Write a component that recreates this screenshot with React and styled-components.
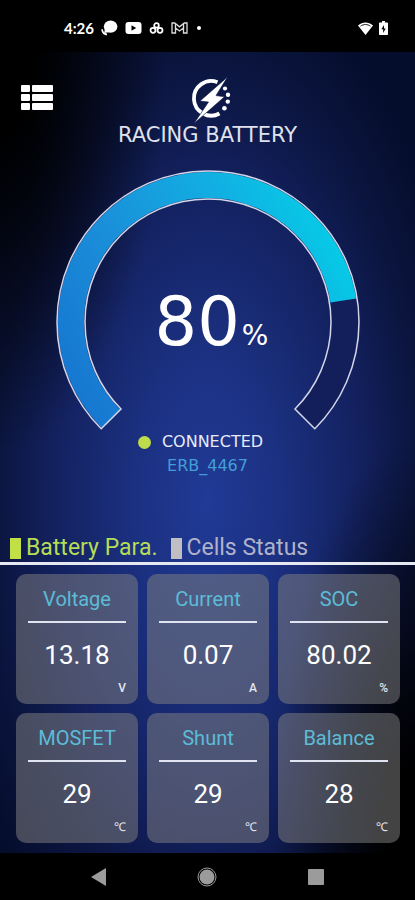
import { useState } from 'react'
import styled, { createGlobalStyle } from 'styled-components'

const GlobalStyle = createGlobalStyle`
   * {
      box-sizing: border-box;
   }

   body {
      margin: 0;
      background-color: #000;
      font-family: Roboto, 'Liberation Sans', sans-serif;
   }

   button {
      padding: 0;
      border: none;
      background: none;
      font-family: inherit;
      cursor: pointer;
   }

   svg {
      display: block;
   }
`

const Screen = styled.div`
   display: flex;
   flex-direction: column;
   min-height: 100vh;
   color: #fff;
`

// status bar
const StatusBar = styled.div`
   display: flex;
   justify-content: space-between;
   align-items: center;
   height: 52px;
   padding: 4px 27px 0 64px;
   background-color: #000;
`

const StatusGroup = styled.div`
   display: flex;
   align-items: center;
   gap: ${(props) => props.$gap};
`

const Clock = styled.span`
   font-family: Lato, sans-serif;
   font-size: 15px;
   font-weight: 700;
   line-height: 16px;
`

const Main = styled.main`
   flex: 1;
   display: flex;
   flex-direction: column;
   background:
      radial-gradient(ellipse 40% 50% at 0% 0%, #000 20%, transparent 100%),
      radial-gradient(ellipse 34% 52% at 100% 100%, #000 20%, transparent 100%),
      radial-gradient(ellipse 64% 68% at 50% 56%, #203a96 0%, #1b3080 28%, #13215f 58%, #0b153f 80%, #050d2c 100%);
`

const Header = styled.header`
   display: grid;
   grid-template-columns: 1fr auto 1fr;
   align-items: start;
   padding: 24px 21px 0;
`

const MenuButton = styled.button`
   justify-self: start;
   margin-top: 9px;
`

const Brand = styled.div`
   display: flex;
   flex-direction: column;
   align-items: center;
   gap: 1px;
`

const BrandName = styled.h1`
   margin: 0;
   font-family: 'DejaVu Sans', sans-serif;
   font-size: 21px;
   font-weight: 400;
   line-height: 20px;
   color: #dfe1ec;
`

// the number sits in the same grid cell as the gauge
const GaugeBox = styled.section`
   display: grid;
   justify-items: center;
   align-items: center;
   margin-top: 24px;

   > * {
      grid-area: 1 / 1;
   }
`

const Percent = styled.p`
   display: flex;
   align-items: baseline;
   gap: 2px;
   margin: 56px 0 0 8px;
   font-family: 'DejaVu Sans', sans-serif;
   font-size: 67px;
   line-height: 68px;
`

const PercentSign = styled.span`
   font-size: 28px;
`

const Connection = styled.section`
   display: flex;
   flex-direction: column;
   align-items: center;
   margin-top: -3px;
   font-family: 'DejaVu Sans', sans-serif;
   font-size: 16px;
   line-height: 24px;
`

const ConnectionState = styled.div`
   display: flex;
   align-items: center;
   gap: 11px;
   margin-right: 14px;
   color: #e8eafa;

   &::before {
      content: '';
      width: 13px;
      height: 13px;
      border-radius: 50%;
      background-color: #bedb4c;
   }
`

const DeviceName = styled.div`
   color: #429fd6;
`

const Tabs = styled.div`
   display: flex;
   gap: 13px;
   margin-top: 56px;
   padding: 0 10px;
   border-bottom: 3px solid #e6e8f2;
`

const Tab = styled.button`
   display: flex;
   align-items: center;
   gap: 5px;
   font-size: 23px;
   line-height: 28px;
   color: ${(props) => (props.$active ? '#b5dc57' : '#b1b2c8')};

   &::before {
      content: '';
      width: 11px;
      height: 21px;
      background-color: ${(props) => (props.$active ? '#c0e046' : '#bfbfc3')};
   }
`

const CardGrid = styled.section`
   display: grid;
   grid-template-columns: repeat(3, 1fr);
   gap: 9px;
   padding: 9px 15px 10px 16px;
`

const Card = styled.article`
   display: flex;
   flex-direction: column;
   height: 130px;
   padding: 12px 12px 8px;
   border-radius: 10px;
   background-color: rgba(128, 128, 128, 0.52);
   text-align: center;
`

const CardTitle = styled.h2`
   margin: 0;
   padding-bottom: 9px;
   border-bottom: 2px solid #dfe4f0;
   font-size: 20px;
   font-weight: 400;
   line-height: 26px;
   color: #5cbcd6;
`

const CardValue = styled.div`
   margin-top: 16px;
   font-size: 26px;
   line-height: 32px;
`

const CardUnit = styled.div`
   margin-top: auto;
   font-size: 12px;
   font-weight: 500;
   line-height: 16px;
   text-align: right;
   color: #e4e6f0;
`

const NavBar = styled.nav`
   display: flex;
   justify-content: space-between;
   align-items: center;
   height: 47px;
   padding: 0 91px;
   background-color: #000;
`

const NavButton = styled.button`
   color: #9b9b9b;
`

const readings = [
   { title: 'Voltage', value: '13.18', unit: 'V' },
   { title: 'Current', value: '0.07', unit: 'A' },
   { title: 'SOC', value: '80.02', unit: '%' },
   { title: 'MOSFET', value: '29', unit: '℃' },
   { title: 'Shunt', value: '29', unit: '℃' },
   { title: 'Balance', value: '28', unit: '℃' },
]

const tabs = ['Battery Para.', 'Cells Status']

function StatusIcons() {
   return (
      <>
         <svg width="17" height="16" viewBox="0 0 17 16" fill="#fff">
            <ellipse cx="9.6" cy="6.6" rx="6.8" ry="6.2" />
            <path d="M4 8 3.200 13 9 12z" />
            <path d="M.3 9.200c0 3.300 2.200 5.800 5.700 6.100v-1.800C3.500 13.200 2 11.500 1.900 9.200z" />
         </svg>
         <svg width="17" height="12" viewBox="0 0 17 12">
            <rect x="0.5" width="16" height="12" rx="3" fill="#fff" />
            <path d="M6.500 3.200v5.600L11.200 6z" fill="#000" />
         </svg>
         <svg width="15" height="12" viewBox="0 0 15 12" fill="none" stroke="#fff" strokeWidth="1.800">
            <circle cx="7.500" cy="3.400" r="2.300" />
            <circle cx="4" cy="8.300" r="2.500" />
            <circle cx="11" cy="8.300" r="2.500" />
         </svg>
         <svg width="17" height="12" viewBox="0 0 17 12" fill="none" stroke="#ddd" strokeWidth="1.300">
            <path d="M1 1h2.700l4.800 3.800L13.300 1H16v10h-3.500V6L8.500 9l-4-3v5H1z" />
            <path d="M4.500 2v4M12.500 2v4" />
         </svg>
         <svg width="10" height="12" viewBox="0 0 10 12" fill="#fff">
            <circle cx="4" cy="6" r="2" />
         </svg>
      </>
   )
}

function BrandLogo() {
   return (
      <svg width="46" height="48" viewBox="-6 0 46 48" fill="#fff">
         <path d="M26.500 6.200A17.300 17.300 0 1 0 28.500 37.500" fill="none" stroke="#fff" strokeWidth="3.800" />
         <path d="M36.500 1 9 25l8.500 1L3 47.500 33.500 20.800l-8.500-1.200z" stroke="#0b1644" strokeWidth="0.600" />
         <circle cx="34" cy="12.500" r="2.100" />
         <circle cx="37" cy="18.700" r="2.200" />
         <circle cx="36.800" cy="25.600" r="2.200" />
         <circle cx="33.400" cy="32.300" r="2.300" />
      </svg>
   )
}

// 270 degree ring, starting at the lower left
function ringPath(outer, inner, percent) {
   const point = (radius, angle) => {
      const rad = (angle * Math.PI) / 180
      return `${153 + radius * Math.cos(rad)} ${153 + radius * Math.sin(rad)}`
   }
   const sweep = 2.7 * percent
   const large = sweep > 180 ? 1 : 0
   const end = 135 + sweep
   return `M${point(outer, 135)}A${outer} ${outer} 0 ${large} 1 ${point(outer, end)}L${point(inner, end)}A${inner} ${inner} 0 ${large} 0 ${point(inner, 135)}z`
}

function Gauge({ percent }) {
   return (
      <svg width="306" height="264" viewBox="0 0 306 264" role="img" aria-label="State of charge">
         <defs>
            <linearGradient id="charge" x1="0" y1="0.9" x2="1" y2="0.4">
               <stop offset="0" stopColor="#1673cf" />
               <stop offset="0.4" stopColor="#1a8fd9" />
               <stop offset="0.75" stopColor="#12aee2" />
               <stop offset="1" stopColor="#06cae6" />
            </linearGradient>
         </defs>
         <path d={ringPath(151, 123, 100)} fill="#121f5a" />
         <path d={ringPath(150, 124, percent)} fill="url(#charge)" />
         <path d={ringPath(151, 123, 100)} fill="none" stroke="#d3d6ea" strokeWidth="1.500" />
      </svg>
   )
}

function App() {
   const [activeTab, setActiveTab] = useState(tabs[0])

   return (
      <Screen>
         <GlobalStyle />
         <StatusBar>
            <StatusGroup $gap="7px">
               <Clock>4:26</Clock>
               <StatusIcons />
            </StatusGroup>
            <StatusGroup $gap="6px">
               <svg width="15" height="13" viewBox="0 0 15 13">
                  <path d="M0 3.400C4.300-.6 10.700-.6 15 3.400L7.500 13z" fill="#fff" />
                  <path d="M2.500 4.200c3-2.200 7-2.200 10 0" fill="none" stroke="#000" strokeWidth="0.900" />
               </svg>
               <svg width="9" height="14" viewBox="0 0 9 14">
                  <path d="M3 0h3v1.500h2.200q.8 0 .8.800v10.900q0 .8-.8.800H.8q-.8 0-.8-.8V2.300q0-.8.8-.8H3z" fill="#fff" />
                  <path d="M5 4 2.400 8.300h1.800V12l2.500-4.600H5z" fill="#000" />
               </svg>
            </StatusGroup>
         </StatusBar>

         <Main>
            <Header>
               <MenuButton type="button" aria-label="Menu">
                  <svg width="32" height="25" viewBox="0 0 32 25" fill="#fff">
                     {[0, 9, 18].map((y) => (
                        <g key={y}>
                           <rect y={y} width="9" height="7" rx="1" />
                           <rect x="11" y={y} width="21" height="7" rx="1" />
                        </g>
                     ))}
                  </svg>
               </MenuButton>
               <Brand>
                  <BrandLogo />
                  <BrandName>RACING BATTERY</BrandName>
               </Brand>
            </Header>

            <GaugeBox>
               <Gauge percent={80} />
               <Percent>
                  80<PercentSign>%</PercentSign>
               </Percent>
            </GaugeBox>

            <Connection>
               <ConnectionState>CONNECTED</ConnectionState>
               <DeviceName>ERB_4467</DeviceName>
            </Connection>

            <Tabs>
               {tabs.map((tab) => (
                  <Tab key={tab} type="button" $active={tab === activeTab} onClick={() => setActiveTab(tab)}>
                     {tab}
                  </Tab>
               ))}
            </Tabs>

            <CardGrid>
               {readings.map((reading) => (
                  <Card key={reading.title}>
                     <CardTitle>{reading.title}</CardTitle>
                     <CardValue>{reading.value}</CardValue>
                     <CardUnit>{reading.unit}</CardUnit>
                  </Card>
               ))}
            </CardGrid>
         </Main>

         <NavBar>
            <NavButton type="button" aria-label="Back">
               <svg width="15" height="18" viewBox="0 0 15 18" fill="currentColor">
                  <path d="M15 0v18L0 9z" />
               </svg>
            </NavButton>
            <NavButton type="button" aria-label="Home">
               <svg width="20" height="20" viewBox="0 0 20 20" fill="currentColor">
                  <circle cx="10" cy="10" r="7.500" />
                  <circle cx="10" cy="10" r="9" fill="none" stroke="currentColor" />
               </svg>
            </NavButton>
            <NavButton type="button" aria-label="Recent apps">
               <svg width="16" height="16" viewBox="0 0 16 16" fill="currentColor">
                  <rect width="16" height="16" rx="1" />
               </svg>
            </NavButton>
         </NavBar>
      </Screen>
   )
}

export default App
